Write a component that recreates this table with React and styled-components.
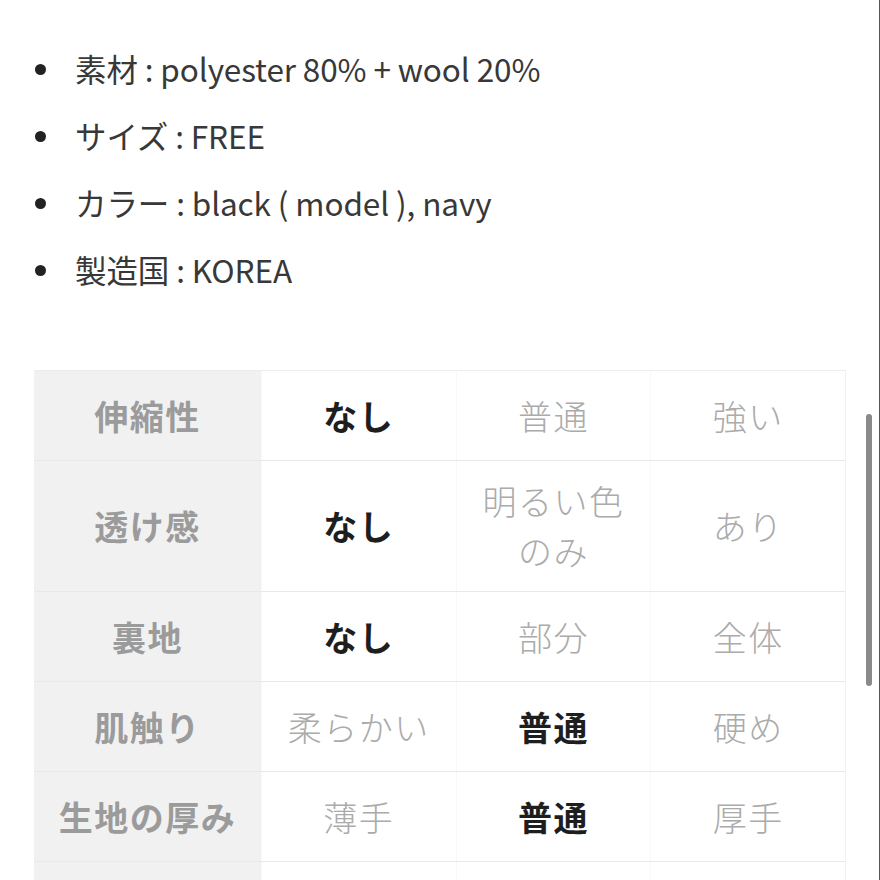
import styled, { createGlobalStyle } from 'styled-components'

const GlobalStyle = createGlobalStyle`
  html, body {
    margin: 0;
    padding: 0;
    background: #fff;
  }
  body {
    font-family: "Noto Sans CJK JP", "Noto Sans", sans-serif;
    color: #333;
  }
`

const Page = styled.div`
  position: relative;
  box-sizing: border-box;
  width: 880px;
  height: 880px;
  overflow: hidden;
  border-right: 1px solid #555;
  padding-top: 35px;
`

const SpecList = styled.ul`
  list-style: none;
  margin: 0;
  padding: 0 0 0 75px;
`

const SpecItem = styled.li`
  position: relative;
  height: 67px;
  line-height: 67px;
  font-size: 31.5px;
  font-weight: 400;
  color: #383838;
  letter-spacing: -0.1px;

  &::before {
    content: '';
    position: absolute;
    left: -40px;
    top: 29px;
    width: 11px;
    height: 11px;
    border-radius: 50%;
    background: #222;
  }
`

const Table = styled.div`
  margin: 67px 0 0 34px;
  width: 811px;
  border-top: 1px solid #ececec;
  border-right: 1px solid #f2f2f2;
`

const Row = styled.div`
  display: grid;
  grid-template-columns: 227px repeat(3, 1fr);
  border-bottom: 1px solid #e9e9e9;
`

const Cell = styled.div`
  display: flex;
  align-items: center;
  justify-content: center;
  text-align: center;
  box-sizing: border-box;
  min-height: 89px;
  padding: 15px 8px;
  font-size: 34px;
  line-height: 50px;
  letter-spacing: 1.5px;
  background: ${p => (p.$head ? '#f1f1f1' : '#fff')};
  color: ${p => (p.$head ? '#9b9b9b' : p.$on ? '#1e1e1e' : '#ababab')};
  font-weight: ${p => (p.$head || p.$on ? 700 : 300)};
  border-left: ${p => (p.$head ? 'none' : '1px solid #f8f8f8')};
`

const Scrollbar = styled.div`
  position: absolute;
  right: 7px;
  top: 414px;
  width: 6px;
  height: 272px;
  border-radius: 3px;
  background: #8a8a8a;
`

const specs = [
  '素材 : polyester 80% + wool 20%',
  'サイズ : FREE',
  'カラー : black ( model ), navy',
  '製造国 : KOREA'
]

const rows = [
  { label: '伸縮性', values: ['なし', '普通', '強い'], on: 0 },
  { label: '透け感', values: ['なし', <>明るい色<br />のみ</>, 'あり'], on: 0 },
  { label: '裏地', values: ['なし', '部分', '全体'], on: 0 },
  { label: '肌触り', values: ['柔らかい', '普通', '硬め'], on: 1 },
  { label: '生地の厚み', values: ['薄手', '普通', '厚手'], on: 1 },
  { label: '', values: ['', '', ''], on: -1 }
]

export default function App() {
  return (
    <>
      <GlobalStyle />
      <Page>
        <SpecList>
          {specs.map(s => <SpecItem key={s}>{s}</SpecItem>)}
        </SpecList>
        <Table>
          {rows.map((r, i) => (
            <Row key={i}>
              <Cell $head>{r.label}</Cell>
              {r.values.map((v, j) => (
                <Cell key={j} $on={j === r.on}>{v}</Cell>
              ))}
            </Row>
          ))}
        </Table>
        <Scrollbar />
      </Page>
    </>
  )
}
